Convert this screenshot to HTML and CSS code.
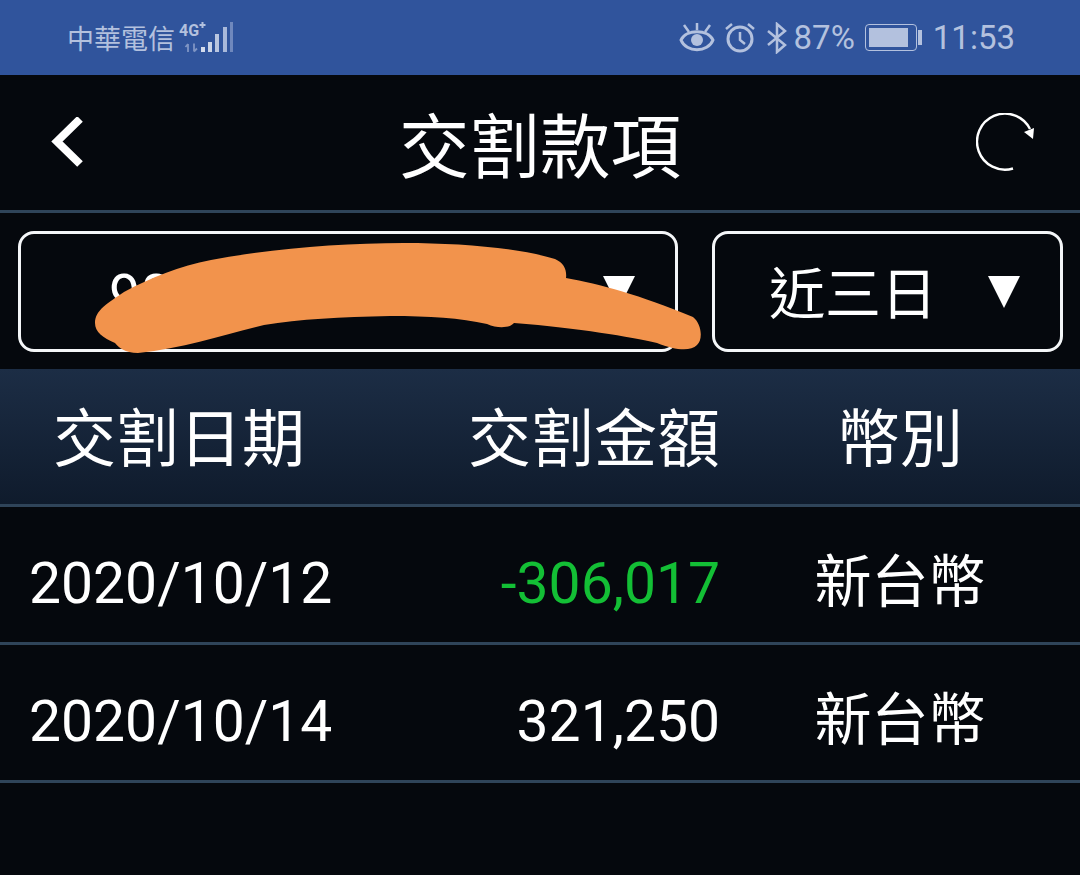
FILE: index.html
```html
<!DOCTYPE html>
<html lang="zh-Hant">
<head>
    <meta charset="UTF-8">
    <title>交割款項</title>
    <link rel="stylesheet" href="styles.css">
</head>
<body>
    <!-- Status bar -->
    <div class="status-bar">
        <div class="status-left">
            <span class="carrier">中華電信</span>
            <svg class="signal" width="58" height="34" viewBox="0 0 58 34">
                <text x="1" y="15" class="net-label">4G</text>
                <path d="M24.500 1v6M21.500 4h6" stroke="#b3c1de" stroke-width="2"/>
                <path d="M10 31v-8M7.500 26l2.500-3M16 22.500v8M16 30.500l3-3" stroke="#7f95c4" stroke-width="1.800" fill="none"/>
                <rect x="23" y="26" width="4" height="5" fill="#d3dbec"/>
                <rect x="30" y="21" width="4" height="10" fill="#cbd5e8"/>
                <rect x="37" y="13" width="4" height="18" fill="#b9c6e0"/>
                <rect x="45" y="6" width="4" height="25" fill="#a9b9da"/>
                <rect x="52" y="1" width="3" height="30" fill="#6f88bd"/>
            </svg>
        </div>
        <div class="status-right">
            <svg width="36" height="32" viewBox="0 0 36 32" fill="none" stroke="#b3c1de" stroke-width="3">
                <path d="M2 18C7 7 29 7 34 18C29 31 7 31 2 18Z"/>
                <circle cx="18" cy="18" r="6" fill="#b3c1de" stroke="none"/>
                <path d="M5 3l5 7M31 3l-5 7M18 1v7" stroke-width="2.500"/>
            </svg>
            <svg width="32" height="32" viewBox="0 0 32 32" fill="none" stroke="#b3c1de" stroke-width="3">
                <circle cx="16" cy="17" r="12"/>
                <path d="M16 10v8l5 4M2 7l6-5M30 7l-6-5" stroke-width="2.500"/>
            </svg>
            <svg class="bluetooth" width="22" height="32" viewBox="0 0 22 32" fill="none" stroke="#b3c1de" stroke-width="2.500">
                <path d="M2 9L19 23L11 30V2L19 9L2 23"/>
            </svg>
            <span class="percent">87%</span>
            <div class="battery"><div class="battery-fill"></div></div>
            <div class="battery-cap"></div>
            <span class="clock">11:53</span>
        </div>
    </div>

    <!-- Title -->
    <header class="nav">
        <svg class="back" width="36" height="52" viewBox="0 0 36 52" fill="none" stroke="#fff" stroke-width="8">
            <path d="M31 2L8 24.500L31 47"/>
        </svg>
        <h1 class="nav-title">交割款項</h1>
        <svg class="refresh" width="60" height="60" viewBox="0 0 60 60" fill="none" stroke="#fff" stroke-width="2.400">
            <path d="M37 55.500A28 28 0 1 1 54 16"/>
            <path d="M48 19L58 15L57 26Z" fill="#fff" stroke="none"/>
        </svg>
    </header>

    <!-- Filters -->
    <div class="filters">
        <div class="select select-account">
            <span class="select-text account-text">98</span>
            <span class="arrow"></span>
        </div>
        <div class="select select-range">
            <span class="select-text">近三日</span>
            <span class="arrow"></span>
        </div>
        <svg class="scribble" width="1080" height="156" viewBox="0 213 1080 156">
            <path d="M95 323C95 310 108 303 124 292C150 278 180 266 211 260C270 249 340 243 404 243C460 243 520 248 555 259C564 263 567 270 566 278C600 284 640 295 693 317C702 324 703 340 697 345C690 352 675 350 657 343C630 337 580 328 514 323C510 328 498 329 487 324C460 318 430 316 390 316C340 317 300 319 264 325C225 334 185 348 138 353C125 353 118 347 115 343C103 338 95 332 95 323Z" fill="#f2934c"/>
        </svg>
    </div>

    <!-- Table -->
    <div class="table-row table-head">
        <div class="col-date">交割日期</div>
        <div class="col-amount">交割金額</div>
        <div class="col-currency">幣別</div>
    </div>
    <div class="table-row table-body-row">
        <div class="col-date cell-date">2020/10/12</div>
        <div class="col-amount cell-amount negative">-306,017</div>
        <div class="col-currency cell-currency">新台幣</div>
    </div>
    <div class="table-row table-body-row">
        <div class="col-date cell-date">2020/10/14</div>
        <div class="col-amount cell-amount">321,250</div>
        <div class="col-currency cell-currency">新台幣</div>
    </div>
</body>
</html>
```
FILE: styles.css
```css
body {
    margin: 0;
    width: 1080px;
    height: 875px;
    overflow: hidden;
    background: #05080d;
    color: #fff;
    font-family: Roboto, "Noto Sans CJK TC", sans-serif;
}
.status-bar {
    height: 75px;
    box-sizing: border-box;
    padding: 0 65px 0 67px;
    display: flex;
    align-items: center;
    justify-content: space-between;
    background: #30549c;
    color: #b3c1de;
}
.status-left, .status-right {
    display: flex;
    align-items: center;
}
.carrier {
    font-size: 27px;
    font-family: "Noto Sans CJK TC", sans-serif;
}
.signal {
    margin-left: 3px;
}
.net-label {
    font-family: Roboto, sans-serif;
    font-size: 16px;
    font-weight: 700;
    fill: #b3c1de;
}
.status-right {
    gap: 9px;
}
.bluetooth {
    margin-left: 1px;
}
.percent {
    font-size: 33px;
    margin-left: -3px;
}
.battery {
    width: 52px;
    height: 27px;
    margin-left: 1px;
    padding: 3px;
    box-sizing: border-box;
    border: 1.500px solid #b3c1de;
    border-radius: 4px;
}
.battery-fill {
    height: 100%;
    width: 90%;
    background: #b3c1de;
}
.battery-cap {
    width: 4px;
    height: 15px;
    margin-left: -8px;
    background: #b3c1de;
}
.clock {
    font-size: 33px;
    margin-left: 2px;
}
.nav {
    height: 135px;
    box-sizing: border-box;
    padding: 0 44px;
    display: grid;
    grid-template-columns: 1fr auto 1fr;
    align-items: center;
}
.back {
    margin-left: 5px;
}
.nav-title {
    margin: 0;
    padding-top: 13px;
    font-size: 70.500px;
    font-weight: 400;
    line-height: 1;
}
.refresh {
    justify-self: end;
}
.filters {
    position: relative;
    height: 159px;
    box-sizing: border-box;
    padding: 18px 17px 0 18px;
    display: flex;
    justify-content: space-between;
    border-top: 3px solid #2f4459;
}
.select {
    box-sizing: border-box;
    height: 121px;
    display: flex;
    align-items: center;
    justify-content: space-between;
    border: 3px solid #f4f6f8;
    border-radius: 16px;
}
.select-account {
    width: 660px;
    padding: 0 40px 0 88px;
}
.select-range {
    width: 351px;
    padding: 0 40px 0 54px;
}
.select-text {
    padding-top: 7px;
    font-size: 56px;
    line-height: 1;
}
.arrow {
    width: 0;
    height: 0;
    border-left: 16px solid transparent;
    border-right: 16px solid transparent;
    border-top: 32px solid #fff;
}
.scribble {
    position: absolute;
    left: 0;
    top: 0;
}
.table-row {
    height: 138px;
    box-sizing: border-box;
    display: flex;
    align-items: center;
    border-bottom: 3px solid #2f4459;
}
.table-body-row {
    padding-top: 10px;
}
.table-head {
    padding-bottom: 6px;
    font-size: 63px;
    background: linear-gradient(#1c2d45, #0f1b2c);
}
.col-date {
    width: 382px;
    box-sizing: border-box;
    padding-left: 29px;
}
.table-head .col-date {
    padding-left: 53px;
}
.col-amount {
    width: 338px;
    text-align: right;
}
.col-currency {
    flex: 1;
    text-align: center;
}
.cell-date, .cell-amount {
    padding-top: 8px;
    font-size: 57px;
}
.cell-currency {
    padding-bottom: 6px;
    font-size: 57px;
}
.negative {
    color: #13bf35;
}
```
